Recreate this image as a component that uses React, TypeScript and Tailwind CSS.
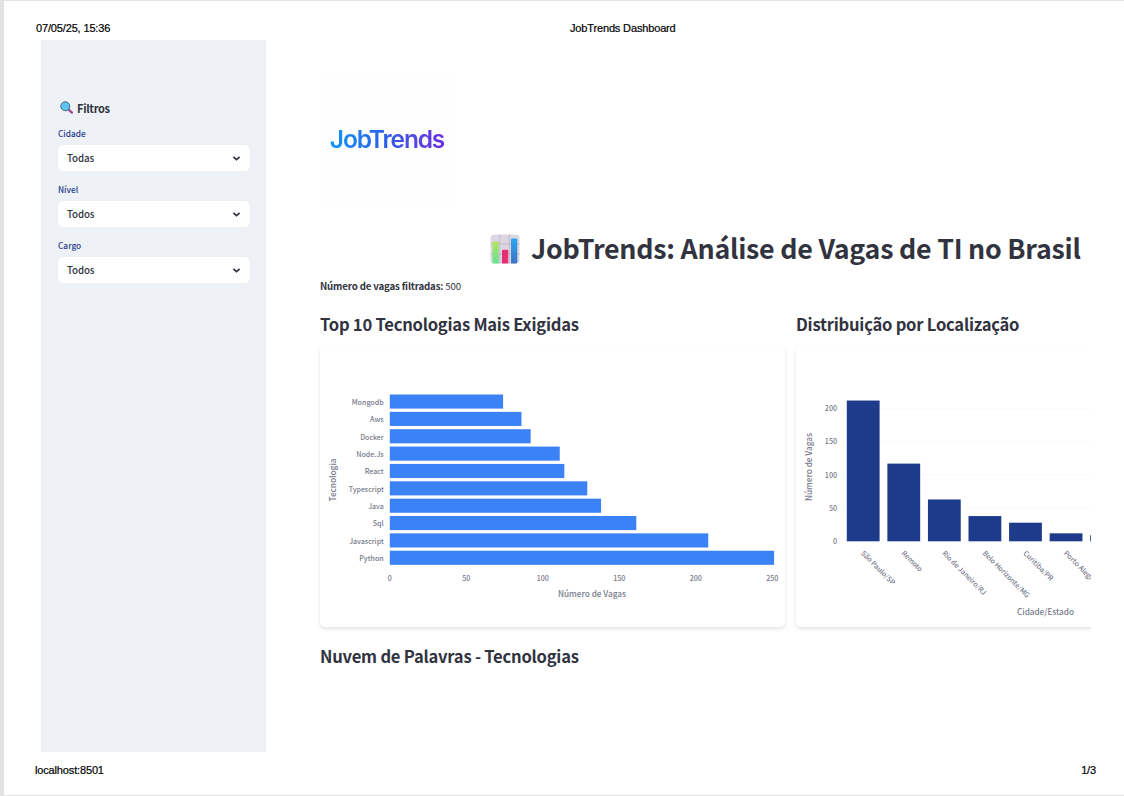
import React from "react";

const SANS = "font-['Noto_Sans_CJK_SC','Noto_Sans_CJK_JP',sans-serif]";

const technologies = [
  { name: "Mongodb", value: 74, label: 32 },
  { name: "Aws", value: 86, label: 13.6 },
  { name: "Docker", value: 92, label: 23.5 },
  { name: "Node.Js", value: 111, label: 27.5 },
  { name: "React", value: 114, label: 19 },
  { name: "Typescript", value: 129, label: 35 },
  { name: "Java", value: 138, label: 15.5 },
  { name: "Sql", value: 161, label: 11 },
  { name: "Javascript", value: 208, label: 34.5 },
  { name: "Python", value: 251, label: 24.5 },
];

const cities = [
  { name: "São Paulo/SP", value: 212, label: 45 },
  { name: "Remoto", value: 117, label: 26 },
  { name: "Rio de Janeiro/RJ", value: 63, label: 59 },
  { name: "Belo Horizonte/MG", value: 38, label: 63 },
  { name: "Curitiba/PR", value: 28, label: 39 },
  { name: "Porto Alegre/RS", value: 12, label: 54 },
];

function SearchIcon() {
  return (
    <svg width="14" height="14" viewBox="0 0 14 14" className="shrink-0">
      <path d="M8.6 8.6 L11.9 11.6" stroke="#9a4f97" strokeWidth="2.4" strokeLinecap="round" />
      <circle cx="5.3" cy="5.3" r="4.5" fill="#5cc3ee" stroke="#4d6b80" strokeWidth="1" />
    </svg>
  );
}

function BarsIcon() {
  return (
    <svg width="30" height="30" viewBox="0 0 30 30" className="shrink-0">
      <defs>
        <linearGradient id="green" x1="0" y1="0" x2="0" y2="1">
          <stop offset="0" stopColor="#b4e45e" />
          <stop offset="1" stopColor="#62e68c" />
        </linearGradient>
        <linearGradient id="blue" x1="0" y1="0" x2="0" y2="1">
          <stop offset="0" stopColor="#2fa5f0" />
          <stop offset="1" stopColor="#3a74c4" />
        </linearGradient>
      </defs>
      <rect x="0.5" y="0.5" width="29" height="29" rx="3.5" fill="#dcd5e2" />
      <path d="M9.7 0.5V29.5M19.3 0.5V29.5M0.5 10H29.5M0.5 20H29.5" stroke="#bcb3c8" strokeWidth="0.8" />
      <path d="M2.5 8.5a1 1 0 0 1 1-1h4.2a1 1 0 0 1 1 1V29.5H4a1.5 1.5 0 0 1-1.5-1.5z" fill="url(#green)" />
      <path d="M12 16.7a1 1 0 0 1 1-1h4.2a1 1 0 0 1 1 1V29.5H12z" fill="#e62e72" />
      <path d="M21 5.5a1 1 0 0 1 1-1h4.3a1 1 0 0 1 1 1V28a1.5 1.5 0 0 1-1.5 1.5H21z" fill="url(#blue)" />
    </svg>
  );
}

function Select({ label, value }: { label: string; value: string }) {
  return (
    <div className="mb-[11px] flex flex-col">
      <span className="h-4 text-[8.3px] leading-4 font-medium text-[#1e3a8a]">{label}</span>
      <div className="mt-[4px] flex h-[26px] items-center justify-between rounded-[5px] bg-white pr-[9px] pl-[9px] shadow-[0_0_1px_rgba(0,0,0,0.08)]">
        <span className="text-[9.7px] leading-[26px] font-medium tracking-[-0.1px] text-[#31333f]">{value}</span>
        <svg width="9" height="7" viewBox="0 0 9 7">
          <path d="M1.4 1.9 L4.5 4.7 L7.6 1.9" fill="none" stroke="#31333f" strokeWidth="1.7" />
        </svg>
      </div>
    </div>
  );
}

function TechChart() {
  return (
    <svg width="465" height="282" viewBox="320 345 465 282" className="block font-medium" fill="#777a8b">
      {technologies.map((t, i) => (
        <g key={t.name}>
          <rect x="389.8" y={394.5 + i * 17.36} width={t.value * 1.531} height="14.1" fill="#3b82f6" />
          <text x="383.7" y={404.9 + i * 17.36} fontSize="7.1" textAnchor="end" textLength={t.label} lengthAdjust="spacingAndGlyphs">
            {t.name}
          </text>
        </g>
      ))}
      {[0, 50, 100, 150, 200, 250].map((v) => (
        <text key={v} x={389.8 + v * 1.53} y="581" fontSize="7.1" textAnchor="middle">
          {v}
        </text>
      ))}
      <text x="592" y="597" fontSize="8.6" textAnchor="middle" textLength="68" lengthAdjust="spacingAndGlyphs">
        Número de Vagas
      </text>
      <text transform="translate(336 480) rotate(-90)" fontSize="8.6" textAnchor="middle" textLength="43" lengthAdjust="spacingAndGlyphs">
        Tecnologia
      </text>
    </svg>
  );
}

function CityChart() {
  return (
    <svg width="295" height="282" viewBox="796 345 295 282" className="block font-medium" fill="#777a8b">
      {[50, 100, 150, 200].map((v) => (
        <path key={v} d={`M843 ${541.3 - v * 0.664}H1091`} stroke="#fbfbfc" />
      ))}
      {[0, 50, 100, 150, 200].map((v) => (
        <text key={v} x="837" y={544 - v * 0.664} fontSize="7.1" textAnchor="end">
          {v}
        </text>
      ))}
      {cities.map((c, i) => (
        <g key={c.name}>
          <rect x={846.8 + i * 40.57} y={541.3 - c.value * 0.664} width="32.8" height={c.value * 0.664} fill="#1e3a8a" />
          <text
            transform={`translate(${860.5 + i * 40.57} 553.7) rotate(45)`}
            fontSize="7.1"
            textLength={c.label}
            lengthAdjust="spacingAndGlyphs"
          >
            {c.name}
          </text>
        </g>
      ))}
      <rect x="1090.2" y="535.3" width="0.8" height="6" fill="#1e3a8a" />
      <text x="1045.5" y="614.5" fontSize="8.6" textAnchor="middle" textLength="57" lengthAdjust="spacingAndGlyphs">
        Cidade/Estado
      </text>
      <text transform="translate(812 467) rotate(-90)" fontSize="8.6" textAnchor="middle" textLength="68" lengthAdjust="spacingAndGlyphs">
        Número de Vagas
      </text>
    </svg>
  );
}

export default function App() {
  return (
    <div className="flex h-[796px] w-[1124px] flex-col overflow-hidden border-t border-b border-l-4 border-[#e2e2e2] bg-white font-['Liberation_Sans',sans-serif]">
      <header className="flex h-[39px] shrink-0 items-start pt-[19px] pl-8 text-[11px] leading-4 tracking-[-0.15px] text-black [-webkit-text-stroke:0.2px_black]">
        <span className="w-[534px]">07/05/25, 15:36</span>
        <span>JobTrends Dashboard</span>
      </header>

      <div className={`flex h-[712px] shrink-0 pl-[37px] ${SANS}`}>
        <aside className="flex w-[225px] shrink-0 flex-col bg-[#eef2f7] pt-[58px] pr-4 pl-[17px]">
          <h2 className="mb-[7px] flex h-5 items-center gap-[3px] pl-[2px] text-[11px] leading-5 font-bold tracking-[-0.3px] text-[#31333f]">
            <SearchIcon />
            Filtros
          </h2>
          <div className="flex flex-col [&>div]:mb-[10px]">
            <Select label="Cidade" value="Todas" />
            <Select label="Nível" value="Todos" />
            <Select label="Cargo" value="Todos" />
          </div>
        </aside>

        <main className="ml-[44px] w-[781px] shrink-0 overflow-hidden pl-[10px] text-[#31333f]">
          <div className="mt-[33px] flex h-[134px] w-[134px] items-center justify-center bg-[#fefefe] pb-[3px]">
            <span className="bg-linear-to-r from-[#0a97f2] via-[#2b5bea] to-[#6a2be0] bg-clip-text font-['Inter',sans-serif] text-[24.5px] leading-8 font-semibold tracking-[-1.15px] text-transparent">
              JobTrends
            </span>
          </div>

          <h1 className="mt-[22px] flex h-10 items-center gap-[11px] pl-[170px] text-[26.8px] leading-[38px] font-bold tracking-[-0.25px] whitespace-nowrap">
            <BarsIcon />
            <span className="pb-[3px]">JobTrends: Análise de Vagas de TI no Brasil</span>
          </h1>

          <p className="mt-[9px] h-4 text-[9.7px] leading-4 tracking-[-0.16px]">
            <strong className="font-bold">Número de vagas filtradas:</strong> 500
          </p>

          <div className="mt-[16px] flex gap-[11px]">
            <section className="w-[465px] shrink-0">
              <h3 className="h-7 text-[16.6px] leading-7 font-bold tracking-[-0.24px]">Top 10 Tecnologias Mais Exigidas</h3>
              <div className="mt-[7px] rounded-[5px] bg-white shadow-[0_2px_4px_rgba(0,0,0,0.11)]">
                <TechChart />
              </div>
            </section>
            <section className="w-[465px] shrink-0">
              <h3 className="h-7 text-[16.6px] leading-7 font-bold tracking-[-0.24px]">Distribuição por Localização</h3>
              <div className="mt-[7px] rounded-[5px] bg-white shadow-[0_2px_4px_rgba(0,0,0,0.11)]">
                <CityChart />
              </div>
            </section>
          </div>

          <h3 className="mt-[15px] h-7 text-[16.6px] leading-7 font-bold tracking-[-0.24px]">Nuvem de Palavras - Tecnologias</h3>
        </main>
      </div>

      <footer className="flex items-start justify-between pt-[10px] pr-7 pl-[31px] text-[11px] leading-4 tracking-[-0.15px] text-black [-webkit-text-stroke:0.2px_black]">
        <span>localhost:8501</span>
        <span>1/3</span>
      </footer>
    </div>
  );
}
